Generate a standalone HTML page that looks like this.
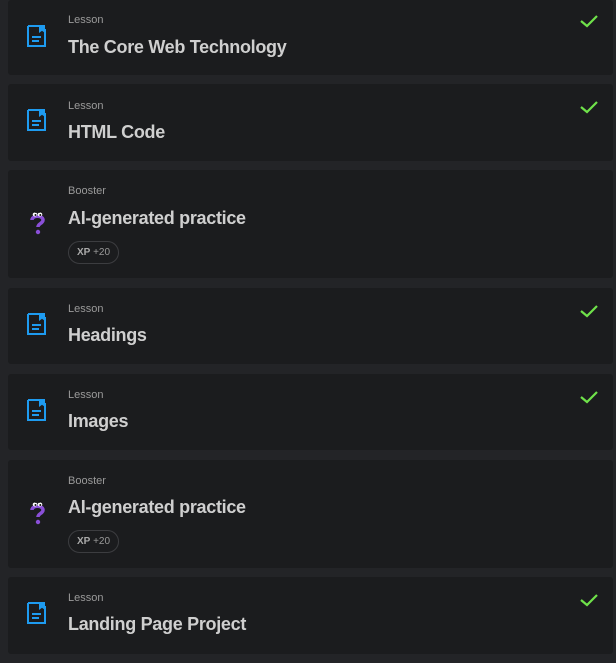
<!DOCTYPE html><html><head><style>
body{margin:0;background:#232427;width:616px;height:663px;overflow:hidden;font-family:"Liberation Sans",sans-serif;position:relative}
.c{position:absolute;left:8px;width:605px;background:#1b1c1e;border-radius:3px}
.ic{position:absolute;left:19px}
.lab{position:absolute;left:60px;font-size:11px;color:#9a9a9a}
.t{position:absolute;left:60px;font-size:18px;font-weight:bold;color:#cfcfcf;letter-spacing:-0.3px}
.ck{position:absolute;right:14px;top:14px}
.xp{position:absolute;left:60px;width:51px;height:23px;border:1px solid #3c3d40;border-radius:12px;box-sizing:border-box;font-size:10px;color:#9a9a9a;line-height:21px;text-align:center}
.xp b{color:#aaa}
</style></head><body>
<svg width="0" height="0" style="position:absolute"><defs>
<g id="doc"><path d="M1 1h11M1 1v20h17V4" fill="none" stroke="#1e9bf0" stroke-width="2"/><path d="M12 0h6v8l-3-2.2L12 8z" fill="#1e9bf0"/><path d="M5 12h9M5 16h7" fill="none" stroke="#1e9bf0" stroke-width="2"/></g>
<g id="chk"><path d="M2 9l6 5 10-10" fill="none" stroke="#6fe24a" stroke-width="2.2"/></g>
<g id="q"><path d="M4 13c0-5 11-5 11 0 0 3.5-5 3.5-5 7" fill="none" stroke="#8a4fd8" stroke-width="3.5"/><circle cx="10" cy="25" r="2.2" fill="#8a4fd8"/><ellipse cx="7" cy="7.5" rx="2.3" ry="2" fill="#fff"/><ellipse cx="12" cy="7.5" rx="2.3" ry="2" fill="#fff"/><circle cx="7.5" cy="8" r="1" fill="#111"/><circle cx="12.3" cy="8" r="1" fill="#111"/><path d="M5 4l3 1.5M13 4l-2 1.5" stroke="#111" stroke-width="1.2"/></g>
</defs></svg>

<div class="c" style="top:0;height:75px"><svg class="ic" style="top:25px" width="20" height="23"><use href="#doc"/></svg><div class="lab" style="top:14px">Lesson</div><div class="t" style="top:37px">The Core Web Technology</div><svg class="ck" style="top:12px" width="20" height="18"><use href="#chk"/></svg></div>

<div class="c" style="top:84px;height:77px"><svg class="ic" style="top:25px" width="20" height="23"><use href="#doc"/></svg><div class="lab" style="top:16px">Lesson</div><div class="t" style="top:38px">HTML Code</div><svg class="ck" style="top:14px" width="20" height="18"><use href="#chk"/></svg></div>

<div class="c" style="top:170px;height:108px"><svg class="ic" style="top:37px;left:20px" width="20" height="28"><use href="#q"/></svg><div class="lab" style="top:15px">Booster</div><div class="t" style="top:38px">AI-generated practice</div><div class="xp" style="top:71px"><b>XP</b> +20</div></div>

<div class="c" style="top:288px;height:76px"><svg class="ic" style="top:25px" width="20" height="23"><use href="#doc"/></svg><div class="lab" style="top:15px">Lesson</div><div class="t" style="top:37px">Headings</div><svg class="ck" style="top:14px" width="20" height="18"><use href="#chk"/></svg></div>

<div class="c" style="top:374px;height:76px"><svg class="ic" style="top:25px" width="20" height="23"><use href="#doc"/></svg><div class="lab" style="top:15px">Lesson</div><div class="t" style="top:37px">Images</div><svg class="ck" style="top:14px" width="20" height="18"><use href="#chk"/></svg></div>

<div class="c" style="top:460px;height:108px"><svg class="ic" style="top:37px;left:20px" width="20" height="28"><use href="#q"/></svg><div class="lab" style="top:15px">Booster</div><div class="t" style="top:37px">AI-generated practice</div><div class="xp" style="top:70px"><b>XP</b> +20</div></div>

<div class="c" style="top:577px;height:77px"><svg class="ic" style="top:25px" width="20" height="23"><use href="#doc"/></svg><div class="lab" style="top:15px">Lesson</div><div class="t" style="top:37px">Landing Page Project</div><svg class="ck" style="top:14px" width="20" height="18"><use href="#chk"/></svg></div>
</body></html>
